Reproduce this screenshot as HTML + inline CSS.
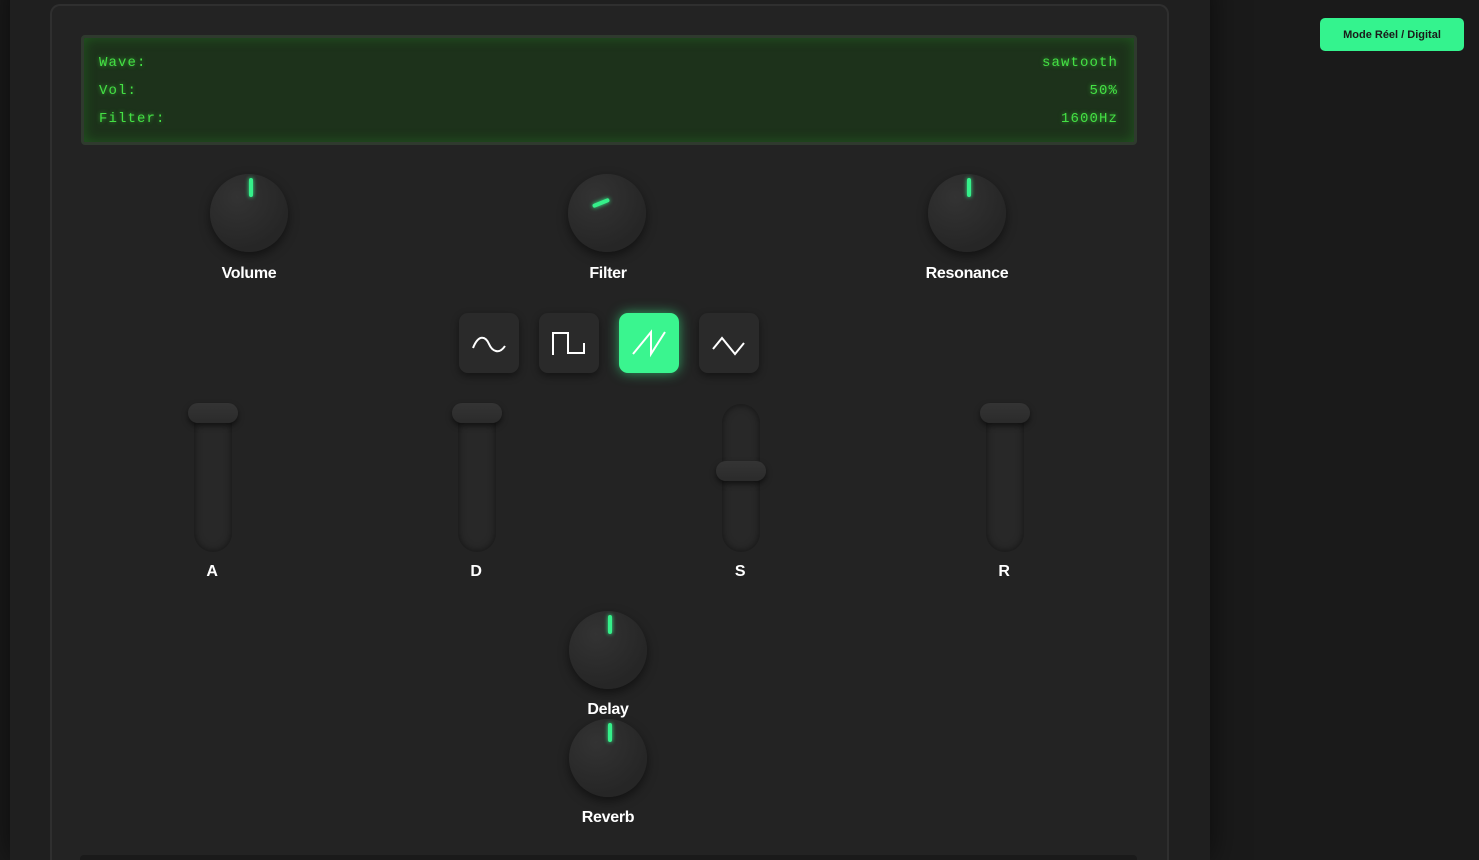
<!DOCTYPE html>
<html style="overflow:hidden;width:1479px;height:860px"><head><meta charset="utf-8"><style>
*{margin:0;padding:0;box-sizing:border-box}
body{width:1479px;height:860px;overflow:hidden;background:#1a1a1a;position:relative;font-family:"Liberation Sans",Arial,sans-serif}
.outer{position:absolute;left:10px;top:-20px;width:1200px;height:880px;background:#1f1f1f;box-shadow:0 0 30px rgba(0,0,0,.6)}
.panel{position:absolute;left:50px;top:4px;width:1119px;height:860px;background:#232323;border:2px solid #2f2f2f;border-bottom:none;border-radius:10px 10px 0 0}
.lcd{position:absolute;left:81px;top:35px;width:1056px;height:110px;background:#1d321b;border:3px solid #2f3a2e;border-radius:4px;box-shadow:inset 0 0 12px rgba(40,160,40,.35);font-family:"Liberation Mono",monospace;font-size:14px;letter-spacing:1.1px;color:#44e044;text-shadow:0 0 4px rgba(60,220,60,.7)}
.row{position:absolute;left:15px;right:16px;display:flex;justify-content:space-between}
.knob{position:absolute;width:78px;height:78px;border-radius:50%;background:radial-gradient(circle at 35% 30%,#333,#262626 70%);box-shadow:0 4px 10px rgba(0,0,0,.5)}
.knob i{position:absolute;left:39px;top:4px;width:4px;height:19px;border-radius:2px;background:#35f08a;box-shadow:0 0 4px #35f08a}
.lbl{position:absolute;color:#fff;font-size:16px;font-weight:bold;letter-spacing:-0.3px;text-align:center;width:200px;transform:translateX(-50%)}
.btn{position:absolute;top:313px;width:60px;height:60px;border-radius:9px;background:#2a2a2a;box-shadow:0 3px 8px rgba(0,0,0,.45)}
.btn svg{position:absolute;left:0;top:0}
.btn.on{background:#3af58f;box-shadow:0 0 12px rgba(58,245,143,.6)}
.track{position:absolute;top:404px;width:38px;height:148px;border-radius:19px;background:#282828;box-shadow:inset 0 0 8px rgba(0,0,0,.55)}
.hand{position:absolute;width:50px;height:20px;border-radius:10px;background:linear-gradient(#343434,#2b2b2b);box-shadow:0 3px 6px rgba(0,0,0,.55)}
.mode{position:absolute;left:1320px;top:18px;width:144px;height:33px;background:#34f38e;border-radius:5px;font-size:11px;font-weight:bold;color:#1a1a1a;text-align:center;line-height:34px}
</style></head><body>
<div class="outer"></div>
<div class="panel"></div>
<div class="lcd">
<div class="row" style="top:17px"><span>Wave:</span><span>sawtooth</span></div>
<div class="row" style="top:45px"><span>Vol:</span><span>50%</span></div>
<div class="row" style="top:73px"><span>Filter:</span><span>1600Hz</span></div>
</div>
<div class="knob" style="left:210px;top:174px"><i></i></div>
<div class="knob" style="left:568px;top:174px"><i style="transform:rotate(68deg);left:31px;top:20px;height:18px"></i></div>
<div class="knob" style="left:928px;top:174px"><i></i></div>
<div class="lbl" style="left:249px;top:265px">Volume</div>
<div class="lbl" style="left:608px;top:265px">Filter</div>
<div class="lbl" style="left:967px;top:265px">Resonance</div>

<div class="btn" style="left:459px"><svg width="60" height="60"><path d="M14 35 C20 20,27 24,30 31 C33 38,40 42,46 33" fill="none" stroke="#fff" stroke-width="2"/></svg></div>
<div class="btn" style="left:539px"><svg width="60" height="60"><path d="M14 42 V20 H29 V40 H45 V30" fill="none" stroke="#fff" stroke-width="2"/></svg></div>
<div class="btn on" style="left:619px"><svg width="60" height="60"><path d="M14 41 L32 19 V41 L46 19" fill="none" stroke="#fff" stroke-width="2"/></svg></div>
<div class="btn" style="left:699px"><svg width="60" height="60"><path d="M14 36 L23 25 L36 41 L45 30" fill="none" stroke="#fff" stroke-width="2"/></svg></div>

<div class="track" style="left:194px"></div><div class="hand" style="left:188px;top:403px"></div>
<div class="track" style="left:458px"></div><div class="hand" style="left:452px;top:403px"></div>
<div class="track" style="left:722px"></div><div class="hand" style="left:716px;top:461px"></div>
<div class="track" style="left:986px"></div><div class="hand" style="left:980px;top:403px"></div>
<div class="lbl" style="left:212px;top:563px">A</div>
<div class="lbl" style="left:476px;top:563px">D</div>
<div class="lbl" style="left:740px;top:563px">S</div>
<div class="lbl" style="left:1004px;top:563px">R</div>

<div class="knob" style="left:569px;top:611px"><i></i></div>
<div class="lbl" style="left:608px;top:701px">Delay</div>
<div class="knob" style="left:569px;top:719px"><i></i></div>
<div class="lbl" style="left:608px;top:809px">Reverb</div>
<div style="position:absolute;left:80px;top:855px;width:1057px;height:8px;background:#1a1a1a;border-radius:4px"></div>

<div class="mode">Mode Réel / Digital</div>
</body></html>
